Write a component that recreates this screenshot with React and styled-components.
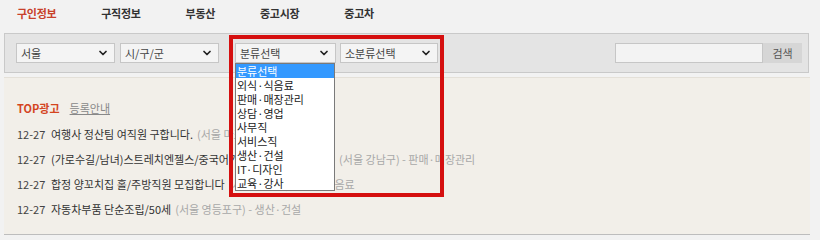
import React from 'react'
import styled, { createGlobalStyle } from 'styled-components'
import { ChevronDown } from 'lucide-react'

const GlobalStyle = createGlobalStyle`
  body {
    margin: 0;
    background: #f2f2f2;
    font-family: "Noto Sans CJK KR", "Noto Sans", sans-serif;
    font-size: 11px;
    color: #333;
  }
`

const Page = styled.div`
  position: relative;
  width: 820px;
  height: 240px;
  overflow: hidden;
`

const Nav = styled.nav`
  display: flex;
  align-items: center;
  gap: 45px;
  height: 25px;
  padding: 0 0 8px 17px;
`

const Tab = styled.a`
  font-size: 11px;
  font-weight: 700;
  letter-spacing: -0.3px;
  color: ${({ active }) => (active ? '#c8412a' : '#333')};
  text-decoration: none;
`

const FilterBar = styled.div`
  display: flex;
  align-items: center;
  margin: 0 11px 0 4px;
  height: 38px;
  padding: 0 6px 0 11px;
  background: #e4e4e4;
  border: 1px solid #c9c9c9;
`

const SelectGroup = styled.div`
  display: flex;
  gap: ${({ gap }) => gap}px;
  margin-right: ${({ right }) => right || 0}px;
`

const SelectBox = styled.div`
  position: relative;
  display: flex;
  align-items: center;
  justify-content: space-between;
  box-sizing: border-box;
  width: ${({ width }) => width}px;
  height: 20px;
  padding: 0 5px 0 4px;
  background: #f4f4f4;
  border: 1px solid #c6c6c6;
  color: #444;
  font-size: 11px;
`

const OptionList = styled.ul`
  position: absolute;
  top: 19px;
  left: -1px;
  z-index: 2;
  width: 98px;
  margin: 0;
  padding: 0;
  list-style: none;
  background: #fff;
  border: 1px solid #7a7a7a;
`

const Option = styled.li`
  height: 14px;
  line-height: 14px;
  padding-left: 1px;
  font-size: 11px;
  color: ${({ selected }) => (selected ? '#fff' : '#222')};
  background: ${({ selected }) => (selected ? '#3399ff' : 'transparent')};
`

const Spacer = styled.div`
  flex: 1;
`

const SearchInput = styled.div`
  width: 148px;
  height: 20px;
  box-sizing: border-box;
  background: #f3f3f3;
  border: 1px solid #c6c6c6;
`

const SearchButton = styled.button`
  width: 39px;
  height: 20px;
  border: none;
  background: #d6d6d6;
  color: #555;
  font-family: inherit;
  font-size: 11px;
  padding: 0;
`

const Content = styled.section`
  margin: 4px 10px 0 4px;
  height: 158px;
  padding: 20px 0 0 13px;
  background: #f2efe9;
  border-bottom: 1px solid #bdbdbd;
  border-top: 1px solid #e4e0d8;
  box-sizing: border-box;
`

const AdHead = styled.div`
  display: flex;
  align-items: center;
  gap: 10px;
  height: 20px;
  margin-bottom: 3px;
`

const AdTitle = styled.span`
  color: #d4451f;
  font-weight: 700;
  font-size: 11px;
`

const AdLink = styled.a`
  color: #888;
  text-decoration: underline;
  font-size: 11px;
`

const Row = styled.div`
  display: flex;
  align-items: center;
  height: 25px;
  white-space: nowrap;
  font-size: 11px;
`

const Date = styled.span`
  flex: none;
  width: 34px;
  color: #444;
`

const Title = styled.span`
  color: #333;
`

const Meta = styled.span`
  color: #a8a8a8;
  margin-left: 4px;
`

const Annotation = styled.div`
  position: absolute;
  left: 229px;
  top: 35px;
  width: 215px;
  height: 162px;
  box-sizing: border-box;
  border: 4px solid #d50f0f;
  z-index: 3;
  pointer-events: none;
`

const TABS = ['구인정보', '구직정보', '부동산', '중고시장', '중고차']

const CATEGORIES = [
  '분류선택', '외식·식음료', '판매·매장관리', '상담·영업', '사무직',
  '서비스직', '생산·건설', 'IT·디자인', '교육·강사'
]

const JOBS = [
  { title: '여행사 정산팀 여직원 구합니다.', meta: '(서울 마포구) - 사무직' },
  { title: '(가로수길/남녀)스트레치엔젤스/중국어가능자 매장 정규직근무', meta: '(서울 강남구) - 판매·매장관리' },
  { title: '합정 양꼬치집 홀/주방직원 모집합니다', meta: '(서울 마포구) - 외식·식음료' },
  { title: '자동차부품 단순조립/50세', meta: '(서울 영등포구) - 생산·건설' }
]

function Select ({ label, width, children }) {
  return (
    <SelectBox width={width}>
      <span>{label}</span>
      <ChevronDown size={12} strokeWidth={3.5} color='#222' />
      {children}
    </SelectBox>
  )
}

export default function App () {
  return (
    <Page>
      <GlobalStyle />
      <Nav>
        {TABS.map((t, i) => (
          <Tab key={t} active={i === 0}>{t}</Tab>
        ))}
      </Nav>
      <FilterBar>
        <SelectGroup gap={5} right={16}>
          <Select label='서울' width={99} />
          <Select label='시/구/군' width={99} />
        </SelectGroup>
        <SelectGroup gap={4}>
          <Select label='분류선택' width={101}>
            <OptionList>
              {CATEGORIES.map((c, i) => (
                <Option key={c} selected={i === 0}>{c}</Option>
              ))}
            </OptionList>
          </Select>
          <Select label='소분류선택' width={98} />
        </SelectGroup>
        <Spacer />
        <SearchInput />
        <SearchButton>검색</SearchButton>
      </FilterBar>
      <Content>
        <AdHead>
          <AdTitle>TOP광고</AdTitle>
          <AdLink>등록안내</AdLink>
        </AdHead>
        {JOBS.map(j => (
          <Row key={j.title}>
            <Date>12-27</Date>
            <Title>{j.title}</Title>
            <Meta>{j.meta}</Meta>
          </Row>
        ))}
      </Content>
      <Annotation />
    </Page>
  )
}
